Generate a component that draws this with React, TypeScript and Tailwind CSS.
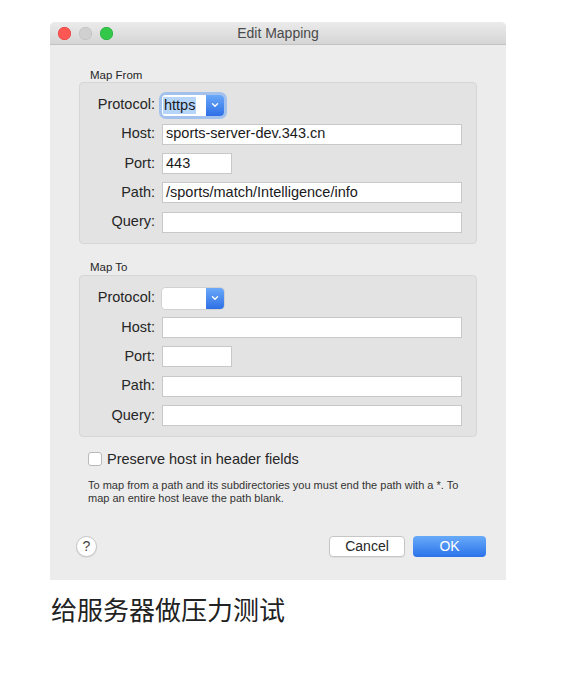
import React from "react";

const font = { fontFamily: '"Liberation Sans", Arial, sans-serif' };

function Chevron() {
  return (
    <svg width="8" height="6" viewBox="0 0 8 6" className="block">
      <path d="M1.5 1.8 L4 4.2 L6.5 1.8" fill="none" stroke="white" strokeWidth="1.4" strokeLinecap="round" strokeLinejoin="round" />
    </svg>
  );
}

function Select({ value, focused }: { value?: string; focused?: boolean }) {
  return (
    <div
      className={
        "flex h-[21px] w-[62px] rounded-[4px] " +
        (focused ? "shadow-[0_0_0_3px_rgba(110,165,245,0.55)]" : "shadow-[0_0_0_1px_rgba(0,0,0,0.08)]")
      }
    >
      <div className="flex flex-1 items-center rounded-l-[4px] bg-white pl-[1px]">
        {value && <span className="bg-[#b5d5fb] px-[1px] text-[14.5px] leading-[17px] text-[#1a1a1a]">{value}</span>}
      </div>
      <div className="flex w-[18px] items-center justify-center rounded-r-[4px] bg-gradient-to-b from-[#6aa8f8] to-[#2e6fe6]">
        <Chevron />
      </div>
    </div>
  );
}

function Input({ value, w }: { value?: string; w: string }) {
  return (
    <div className={`flex h-[21px] items-center border border-[#c8c8c8] bg-white px-[3px] text-[14.5px] text-[#1a1a1a] ${w}`}>
      {value}
    </div>
  );
}

function Row({ label, children }: { label: string; children: React.ReactNode }) {
  return (
    <div className="flex h-[22px] items-center">
      <div className="w-[75px] text-right text-[14.5px] text-[#262626]">{label}</div>
      <div className="ml-[7px] flex items-center">{children}</div>
    </div>
  );
}

function Group({ data }: { data: { protocol?: string; host?: string; port?: string; path?: string; focused?: boolean } }) {
  return (
    <div className="mx-[29px] flex flex-col gap-[7.3px] rounded-[4px] border border-[#d6d6d6] bg-[#e3e3e3] pb-[10px] pt-[11px]">
      <Row label="Protocol:">
        <Select value={data.protocol} focused={data.focused} />
      </Row>
      <Row label="Host:">
        <Input w="w-[300px]" value={data.host} />
      </Row>
      <Row label="Port:">
        <Input w="w-[70px]" value={data.port} />
      </Row>
      <Row label="Path:">
        <Input w="w-[300px]" value={data.path} />
      </Row>
      <Row label="Query:">
        <Input w="w-[300px]" />
      </Row>
    </div>
  );
}

export default function App() {
  return (
    <div className="min-h-[677px] bg-white pt-[22px]" style={font}>
      <div className="ml-[50px] w-[456px] overflow-hidden rounded-t-[5px] bg-[#ececec]">
        <div className="relative flex h-[23px] items-center justify-center border-b border-[#c2c2c2] bg-gradient-to-b from-[#ebebeb] to-[#d5d5d5]">
          <div className="absolute left-[8px] top-[5px] flex gap-[8px]">
            <span className="h-[13px] w-[13px] rounded-full bg-[#fc5753] shadow-[inset_0_0_0_0.5px_#df3d3a]" />
            <span className="h-[13px] w-[13px] rounded-full bg-[#d0d0d0] shadow-[inset_0_0_0_0.5px_#bcbcbc]" />
            <span className="h-[13px] w-[13px] rounded-full bg-[#34c84a] shadow-[inset_0_0_0_0.5px_#24a83a]" />
          </div>
          <span className="text-[14px] text-[#4a4a4a]">Edit Mapping</span>
        </div>

        <div className="ml-[40px] mt-[23px] text-[11.5px] leading-[14px] text-[#262626]">Map From</div>
        <Group data={{ protocol: "https", host: "sports-server-dev.343.cn", port: "443", path: "/sports/match/Intelligence/info", focused: true }} />

        <div className="ml-[40px] mt-[16px] text-[11.5px] leading-[14px] text-[#262626]">Map To</div>
        <div className="mt-[1px]">
          <Group data={{}} />
        </div>

        <div className="ml-[38px] mt-[14px] flex h-[16px] items-center gap-[5px]">
          <span className="h-[14px] w-[14px] rounded-[3px] border border-[#b9b9b9] bg-white" />
          <span className="text-[14.5px] text-[#262626]">Preserve host in header fields</span>
        </div>

        <div className="ml-[38px] mt-[12px] w-[392px] text-[11px] leading-[13px] text-[#333]">
          To map from a path and its subdirectories you must end the path with a *. To map an entire host leave the path blank.
        </div>

        <div className="mt-[31px] flex items-center pb-[23px] pl-[26px] pr-[20px]">
          <div className="flex h-[21px] w-[21px] items-center justify-center rounded-full border border-[#c4c4c4] bg-white text-[14px] text-[#444] shadow-[0_1px_1px_rgba(0,0,0,0.08)]">
            ?
          </div>
          <div className="ml-auto flex gap-[8px]">
            <div className="flex h-[21px] w-[76px] items-center justify-center rounded-[4px] border border-[#c6c6c6] bg-white text-[14px] text-[#262626] shadow-[0_1px_1px_rgba(0,0,0,0.06)]">
              Cancel
            </div>
            <div className="flex h-[21px] w-[73px] items-center justify-center rounded-[4px] bg-gradient-to-b from-[#68aaf9] to-[#2b72ea] text-[14px] text-white">
              OK
            </div>
          </div>
        </div>
      </div>

      <div
        className="ml-[51px] mt-[12px] text-[26px] leading-[34px] text-[#222]"
        style={{ fontFamily: '"Noto Sans CJK SC", "Liberation Sans", sans-serif' }}
      >
        给服务器做压力测试
      </div>
    </div>
  );
}
